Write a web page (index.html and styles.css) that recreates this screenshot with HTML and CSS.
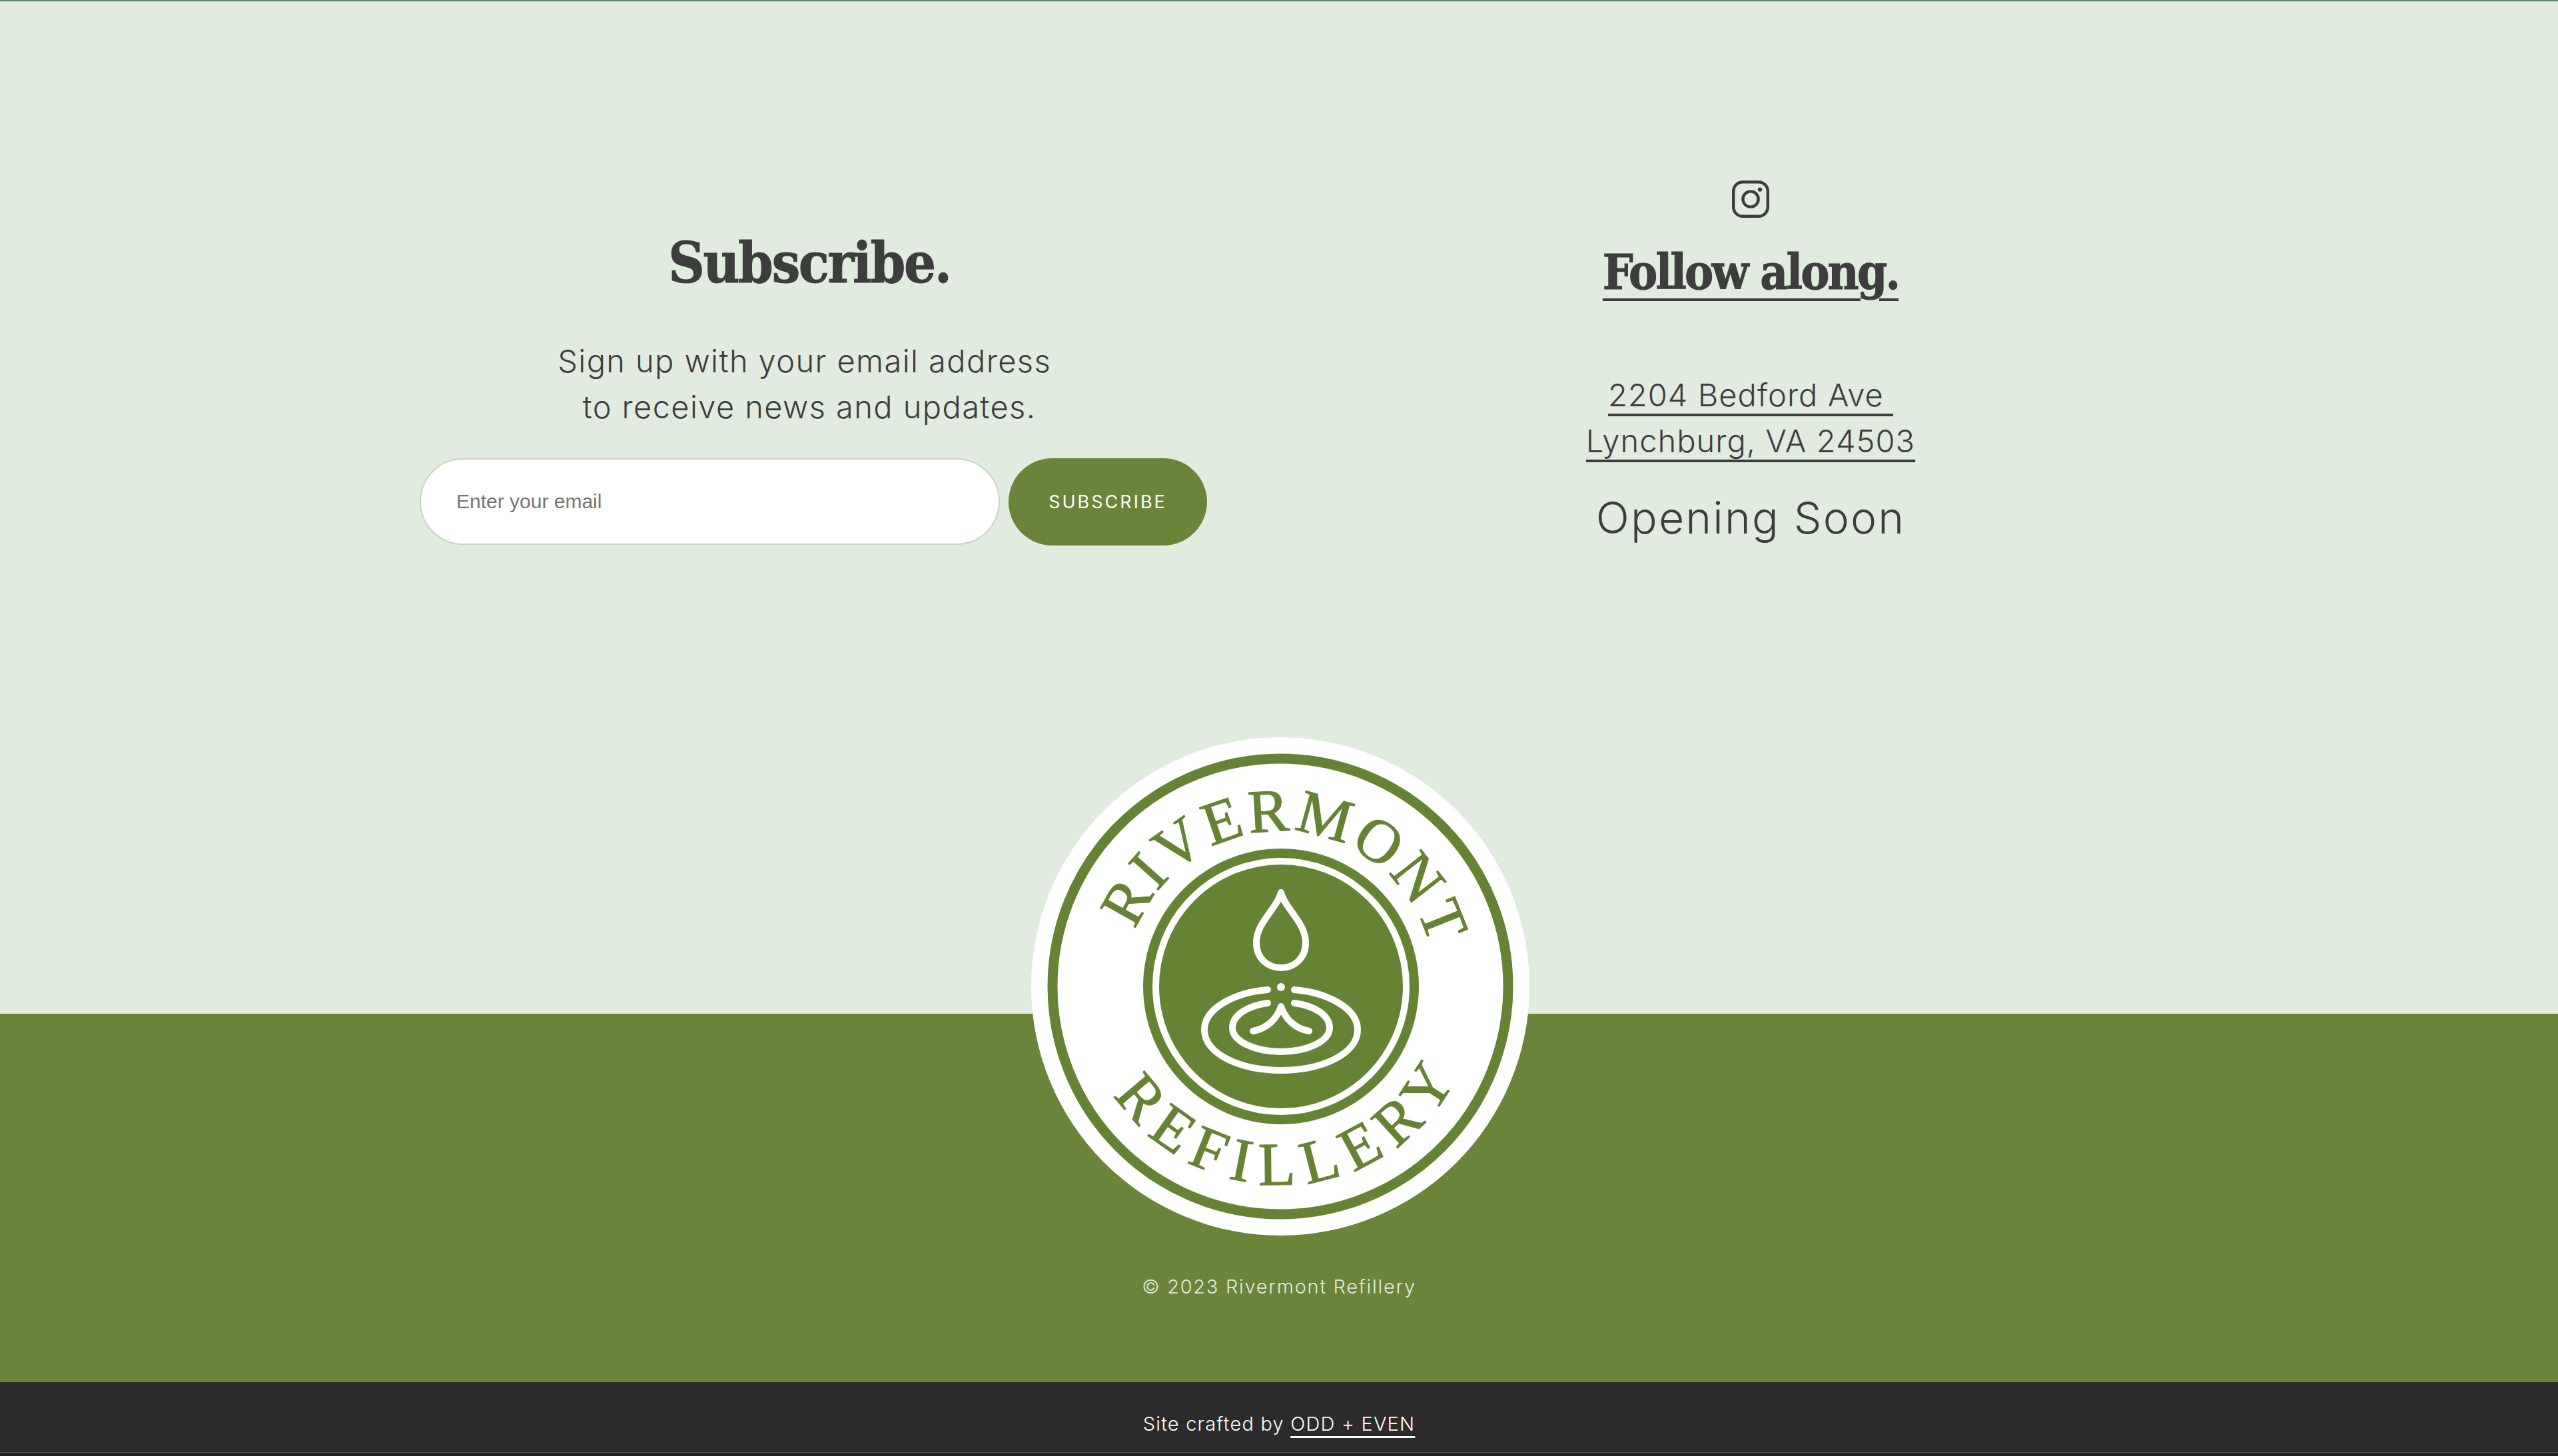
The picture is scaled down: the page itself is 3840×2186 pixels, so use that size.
FILE: index.html
```html
<!DOCTYPE html>
<html lang="en">
<head>
    <meta charset="UTF-8">
    <meta name="viewport" content="width=device-width, initial-scale=1.0">
    <title>Rivermont Refillery</title>
    <link rel="stylesheet" href="styles.css">
</head>
<body>
    <section class="contact">
        <div class="subscribe">
            <h2 class="subscribe-title">Subscribe.</h2>
            <p class="subscribe-text">Sign up with your email address&nbsp;<br>to receive news and updates.</p>
            <form class="subscribe-form">
                <input class="email-input" type="email" placeholder="Enter your email">
                <button class="subscribe-btn" type="button">SUBSCRIBE</button>
            </form>
        </div>
        <div class="follow">
            <a class="insta-link" href="#">
                <svg class="insta-icon" viewBox="0 0 56 56" fill="none" stroke="currentColor" stroke-width="4.4">
                    <rect x="2.2" y="2.2" width="51.6" height="51.6" rx="14" />
                    <circle cx="28" cy="28" r="11.6" />
                    <circle cx="42" cy="13.6" r="3.2" fill="currentColor" stroke="none" />
                </svg>
            </a>
            <h2 class="follow-title"><a href="#">Follow along.</a></h2>
            <p class="address"><a href="#">2204 Bedford Ave&nbsp;<br>Lynchburg, VA 24503</a></p>
            <p class="hours">Opening Soon</p>
        </div>
    </section>

    <footer class="site-footer">
        <svg class="logo" viewBox="-374 -374 748 748">
            <circle r="374" fill="#fff" />
            <circle r="342" fill="none" stroke="#668335" stroke-width="15" />
            <defs>
                <path id="arcTop" d="M -233 0 A 233 233 0 0 1 233 0" transform="rotate(3.5)" />
                <path id="arcBottom" d="M -298 0 A 298 298 0 0 0 298 0" transform="rotate(-4)" />
            </defs>
            <text class="logo-text"><textPath href="#arcTop" startOffset="50%" text-anchor="middle">RIVERMONT</textPath></text>
            <text class="logo-text logo-text-bottom"><textPath href="#arcBottom" startOffset="50%" text-anchor="middle">REFILLERY</textPath></text>
            <g transform="translate(1 0)">
                <circle r="207" fill="#668335" />
                <circle r="188" fill="none" stroke="#fff" stroke-width="10" />
                <g fill="none" stroke="#fff" stroke-width="10" stroke-linecap="round" stroke-linejoin="round">
                    <path d="M 0 -141 C -5 -118 -37 -96 -37 -66 C -37 -42 -20 -28 0 -28 C 20 -28 37 -42 37 -66 C 37 -96 5 -118 0 -141 Z" />
                    <path d="M -20 5 C -68 9 -115 32 -115 65 C -115 102 -60 126 0 126 C 60 126 115 102 115 65 C 115 32 68 9 20 5" />
                    <path d="M -20 25 C -50 29 -73 43 -73 62 C -73 82 -40 98 0 98 C 40 98 73 82 73 62 C 73 43 50 29 20 25" />
                    <path d="M -42 67 C -20 63 -6 48 0 30 C 6 48 20 63 42 67" />
                </g>
                <circle cy="1" r="6" fill="#fff" />
            </g>
        </svg>
        <p class="copyright">© 2023 Rivermont Refillery</p>
    </footer>

    <div class="credit">
        <p>Site crafted by <a href="#">ODD + EVEN</a></p>
    </div>
    <div class="window-edge"></div>
</body>
</html>
```
FILE: styles.css
```css
* {
    margin: 0;
    padding: 0;
    box-sizing: border-box;
}

body {
    font-family: Inter, "Liberation Sans", Arial, sans-serif;
    background-color: #e1ebdf;
    color: #3d3d3d;
}

a {
    color: inherit;
}

.contact {
    display: flex;
    height: 1522px;
    padding-left: 630px;
    border-top: 2px solid #5f7f6c;
}

.subscribe {
    width: 1182px;
    padding-top: 338px;
    text-align: center;
}

.subscribe-title {
    padding-right: 12px;
    font-family: "DejaVu Serif Condensed", "DejaVu Serif", serif;
    font-size: 84px;
    font-weight: 700;
    line-height: 110px;
    letter-spacing: -2.3px;
    -webkit-text-stroke: 1px #3d3d3d;
}

.subscribe-text {
    margin-top: 57px;
    padding-right: 12px;
    font-size: 47px;
    font-weight: 300;
    line-height: 69px;
    letter-spacing: 1.4px;
}

.subscribe-form {
    display: flex;
    gap: 13px;
    margin-top: 43px;
}

.email-input {
    width: 871px;
    height: 130px;
    padding: 0 53px;
    border: 2px solid #ccd5bf;
    border-radius: 65px;
    background: #fff;
    font-family: "Liberation Sans", Arial, sans-serif;
    font-size: 30px;
    outline: none;
}

.email-input::placeholder {
    color: #757575;
    opacity: 1;
}

.subscribe-btn {
    width: 298px;
    height: 131px;
    border: none;
    border-radius: 66px;
    background: #6a8439;
    color: #fff;
    font-family: Inter, "Liberation Sans", Arial, sans-serif;
    font-size: 27px;
    letter-spacing: 3px;
    cursor: pointer;
}

.follow {
    width: 600px;
    margin-left: 516px;
    padding-top: 269px;
    text-align: center;
}

.insta-link {
    display: block;
    height: 56px;
}

.insta-icon {
    display: block;
    width: 56px;
    height: 56px;
    margin: 0 auto;
}

.follow-title {
    margin-top: 37px;
    font-family: "DejaVu Serif Condensed", "DejaVu Serif", serif;
    font-size: 72px;
    font-weight: 700;
    line-height: 90px;
    letter-spacing: -2.8px;
    -webkit-text-stroke: 1px #3d3d3d;
}

.follow-title a {
    text-decoration-thickness: 4px;
    text-underline-offset: 14px;
}

.address {
    margin-top: 104px;
    font-size: 47px;
    font-weight: 300;
    line-height: 69px;
    letter-spacing: 1.05px;
}

.address a {
    text-decoration-thickness: 4px;
    text-underline-offset: 11px;
}

.hours {
    margin-top: 37px;
    font-size: 66px;
    font-weight: 300;
    line-height: 88px;
    letter-spacing: 2.2px;
}

.site-footer {
    position: relative;
    height: 553px;
    padding-top: 390px;
    background: #6a8439;
    text-align: center;
}

.logo {
    position: absolute;
    left: 1548px;
    top: -415px;
    width: 748px;
    height: 748px;
}

.logo-text {
    font-family: "Liberation Serif", serif;
    font-size: 92px;
    letter-spacing: 4.5px;
    fill: #668335;
    stroke: #668335;
    stroke-width: 1.2px;
}

.logo-text-bottom {
    letter-spacing: 16px;
}

.copyright {
    font-size: 29px;
    font-weight: 300;
    line-height: 40px;
    letter-spacing: 1.7px;
    color: #e1ebdf;
}

.credit {
    height: 105px;
    padding-top: 43px;
    background: #2b2b2b;
    text-align: center;
    font-size: 29px;
    font-weight: 300;
    line-height: 40px;
    letter-spacing: 1.2px;
    color: #fff;
}

.credit a {
    text-decoration-thickness: 3px;
    text-underline-offset: 8px;
}

.window-edge {
    height: 6px;
    border-top: 2px solid #4a4a4a;
    background: #1c1c1c;
}
```
